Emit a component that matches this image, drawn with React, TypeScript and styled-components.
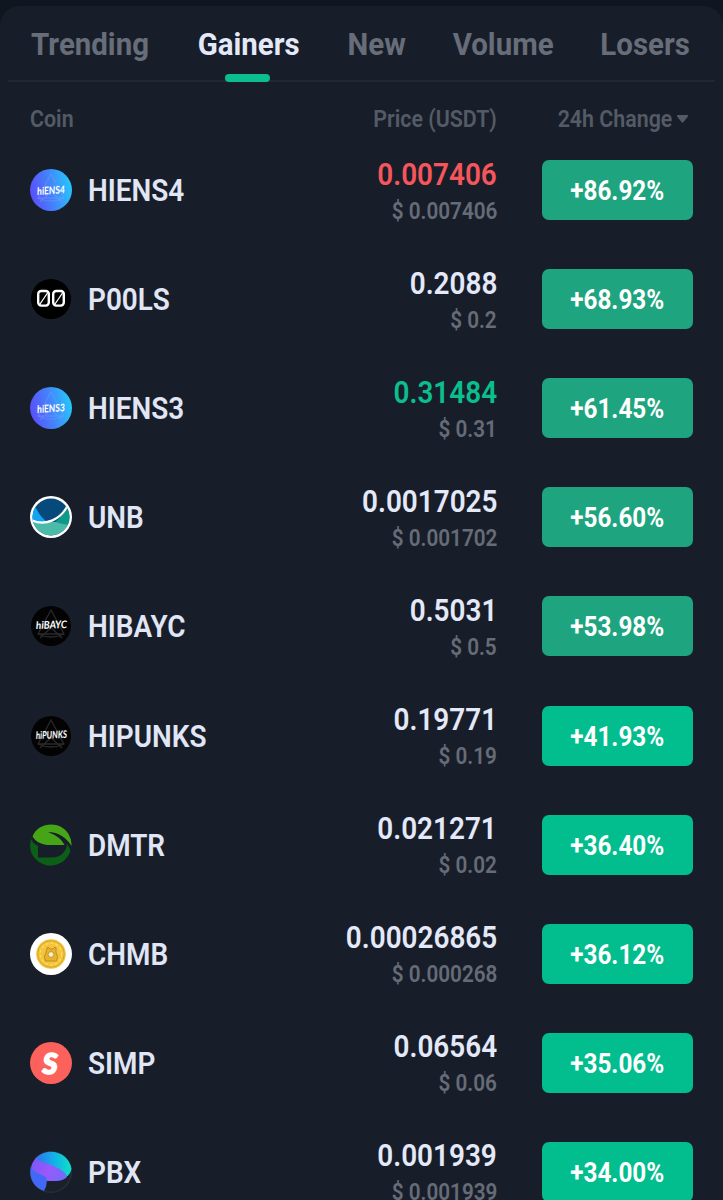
import React from "react";
import styled, { createGlobalStyle } from "styled-components";

const GlobalStyle = createGlobalStyle`
  * { box-sizing: border-box; }
  html, body { margin: 0; padding: 0; background: #0f161f; }
  body { font-family: Roboto, "Liberation Sans", sans-serif; overflow: hidden; }
`;

const Screen = styled.main`
  height: 1200px;
  padding-top: 6px;
  background: #0f161f;
  overflow: hidden;
`;

const Panel = styled.section`
  height: 1194px;
  border-radius: 20px 20px 0 0;
  background: #181e29;
  overflow: hidden;
`;

/* Condensed text: natural glyph shapes narrowed horizontally. */
const Narrow = styled.span<{ $x: number; $from?: string }>`
  display: inline-block;
  white-space: nowrap;
  transform: scaleX(${(p) => p.$x});
  transform-origin: ${(p) => p.$from ?? "left"} center;
`;

const Tabs = styled.nav`
  display: flex;
  justify-content: space-between;
  height: 76px;
  margin: 0 8px;
  padding: 0 24px 0 23px;
  border-bottom: 2px solid #222833;
`;

const Tab = styled.button<{ $active?: boolean; $w: number }>`
  position: relative;
  display: flex;
  justify-content: center;
  width: ${(p) => p.$w}px;
  height: 76px;
  padding: 0;
  border: 0;
  background: none;
  color: ${(p) => (p.$active ? "#e4e9fa" : "#676d79")};
  font: 700 31px/78px Roboto, "Liberation Sans", sans-serif;
  &::after {
    content: "";
    display: ${(p) => (p.$active ? "block" : "none")};
    position: absolute;
    bottom: 0;
    left: 50%;
    width: 45px;
    height: 8px;
    margin-left: -23px;
    border-radius: 4px;
    background: #0abf8d;
  }
`;

const Columns = styled.div`
  display: grid;
  grid-template-columns: 200px 1fr 196px;
  height: 53.5px;
  padding: 0 30px;
  color: #555b66;
  font-size: 23px;
  font-weight: 600;
  line-height: 76px;
`;

const ColumnName = styled.div<{ $end?: boolean }>`
  display: flex;
  align-items: center;
  height: 76px;
  justify-content: ${(p) => (p.$end ? "flex-end" : "flex-start")};
`;

const SortArrow = styled.svg`
  width: 13px;
  height: 10px;
  margin: 0 4px 2px 4px;
`;

const Row = styled.div`
  display: grid;
  grid-template-columns: 58px 200px 1fr 196px;
  align-items: center;
  height: 109.1px;
  padding: 0 30px;
`;

const Coin = styled.svg`
  display: block;
  width: 42px;
  height: 42px;
`;

const Name = styled.div`
  color: #e0e6f6;
  font-size: 31px;
  font-weight: 600;
  line-height: 40px;
  padding-top: 2px;
`;

const Prices = styled.div`
  display: flex;
  flex-direction: column;
  align-items: flex-end;
  padding-top: 6px;
`;

const Price = styled.div<{ $color?: string }>`
  color: ${(p) => p.$color ?? "#e4e9fa"};
  font-size: 31px;
  font-weight: 600;
  line-height: 37px;
`;

const Fiat = styled.div`
  color: #666c77;
  font-size: 23px;
  font-weight: 600;
  line-height: 38px;
`;

const Change = styled.div<{ $bright: boolean }>`
  justify-self: end;
  width: 151px;
  height: 60px;
  border-radius: 7px;
  background: ${(p) => (p.$bright ? "#02bd8d" : "#1ea47e")};
  color: #fff;
  font-size: 27px;
  font-weight: 700;
  line-height: 62px;
  text-align: center;
`;

const Triangles = ({ color }: { color: string }) => (
  <g fill="none" stroke={color} strokeWidth="1.3">
    <path d="M21 5 L34 29 Q21 35 8 29 Z" />
    <path d="M15 17 L32 33 M27 17 L10 33 M8 29 L34 29" />
  </g>
);

const Ens = ({ label, id }: { label: string; id: string }) => (
  <Coin viewBox="0 0 42 42">
    <defs>
      <linearGradient id={id} x1="0" y1=".6" x2="1" y2=".4">
        <stop offset="0" stopColor="#5b4dfb" />
        <stop offset=".5" stopColor="#4384fb" />
        <stop offset="1" stopColor="#25c8fb" />
      </linearGradient>
    </defs>
    <circle cx="21" cy="21" r="21" fill={`url(#${id})`} />
    <Triangles color="rgba(130,160,255,.35)" />
    <text x="21" y="25" textAnchor="middle" fill="#fff" fontFamily="Lato" fontStyle="italic" fontWeight="700" fontSize="10.5" textLength="28" lengthAdjust="spacingAndGlyphs" transform="rotate(-4 21 21)">{label}</text>
  </Coin>
);

const Dark = ({ label }: { label: string }) => (
  <Coin viewBox="0 0 42 42">
    <circle cx="21" cy="21" r="20" fill="#030304" />
    <Triangles color="#2a2a2c" />
    <text x="21.5" y="23.5" textAnchor="middle" fill="#fff" fontFamily="Lato" fontStyle="italic" fontWeight="700" fontSize="10.5" textLength="31" lengthAdjust="spacingAndGlyphs" transform="rotate(-2 21 21)">{label}</text>
  </Coin>
);

const Pools = () => (
  <Coin viewBox="0 0 42 42">
    <circle cx="21" cy="21" r="20" fill="#000" />
    <g fill="none" stroke="#fff" strokeWidth="2.4">
      <rect x="8.2" y="13" width="10.6" height="14.6" rx="3" />
      <rect x="23.2" y="13" width="10.6" height="14.6" rx="3" />
      <path d="M10 26 L17.5 15 M25 26 L32.5 15" strokeWidth="1.3" />
    </g>
  </Coin>
);

const Unb = () => (
  <Coin viewBox="0 0 42 42">
    <defs><clipPath id="unb"><circle cx="21" cy="21" r="18.5" /></clipPath></defs>
    <circle cx="21" cy="21" r="21" fill="#fff" />
    <g clipPath="url(#unb)">
      <rect width="42" height="42" fill="#064a7b" />
      <path d="M0 0 L5 10 Q10 22 20 28 L0 29 Z" fill="#12a4f4" />
      <path d="M42 10 L36 12 Q32 21 25 26 L42 32 Z" fill="#0b9b88" />
      <path d="M0 26 L26 26 Q33 29 42 29 V42 H0 Z" fill="#4cbaa9" />
      <path d="M1 24 C16 31 31 23 38 9" fill="none" stroke="#fff" strokeWidth="2.2" />
    </g>
  </Coin>
);

const Dmtr = () => (
  <Coin viewBox="0 0 42 42">
    <path d="M2.5 12.5 C8 -2 30 -4 38.5 10 Q42 16 41.5 22 C37 14 28 8 18 8 Q31 13 34.5 21 H17 Q7 20 2.5 12.5Z" fill="#45a516" />
    <path d="M1.2 15 Q3 20 8 22 V33.5 H22 C31 33.5 36 28 37 20 Q40 24 40.5 27 C36 40 21 46 9 38 Q-3 29 1.2 15Z" fill="#0c5f17" />
  </Coin>
);

const Chmb = () => (
  <Coin viewBox="0 0 42 42">
    <circle cx="21" cy="21" r="21" fill="#fff" />
    <circle cx="21" cy="21" r="14.8" fill="#f2c53d" />
    <circle cx="21" cy="21" r="13.3" fill="none" stroke="#d8a526" strokeWidth="1" />
    <circle cx="21" cy="21" r="10.8" fill="none" stroke="#ffdc62" strokeWidth="1.2" strokeDasharray="3 2" />
    <path d="M17 15 l1-1 2 2 h3 l2-2 1 1 v5 q3 3 .5 8 h-11 q-2.500-5 .5-8z" fill="#e6b42f" stroke="#c18c24" strokeWidth="1" />
    <circle cx="21" cy="21.500" r="3" fill="#f5e5a4" stroke="#bd8a25" strokeWidth=".8" />
    <circle cx="21" cy="21.500" r="1" fill="#fff" />
  </Coin>
);

const Simp = () => (
  <Coin viewBox="0 0 42 42">
    <circle cx="21" cy="21" r="21" fill="#fc625b" />
    <text x="20" y="32" textAnchor="middle" fill="#fff" stroke="#fff" strokeWidth="1.600" fontFamily="Lato" fontStyle="italic" fontWeight="900" fontSize="29">S</text>
  </Coin>
);

const Pbx = () => (
  <Coin viewBox="0 0 42 42">
    <defs>
      <linearGradient id="pbx1" x1=".1" y1=".3" x2="1" y2=".3">
        <stop offset="0" stopColor="#2a7df0" /><stop offset=".55" stopColor="#10b9e4" /><stop offset="1" stopColor="#10dfc4" />
      </linearGradient>
      <linearGradient id="pbx2" x1="0" y1=".3" x2="1" y2=".7">
        <stop offset="0" stopColor="#7b58fa" /><stop offset=".5" stopColor="#9a58fb" /><stop offset="1" stopColor="#6f6dfa" />
      </linearGradient>
    </defs>
    <circle cx="21" cy="21" r="20.300" fill="#1b202a" stroke="#292e38" strokeWidth="1.400" />
    <path d="M5 8 C16 -5 39 0 41.500 18 Q40 24 36 26 C29 17 17 16 5 8Z" fill="url(#pbx1)" />
    <path d="M6 7 C13 14 34 15 37 26 Q33 30 26 30 H18 L4 29 Q-3 17 6 7Z" fill="url(#pbx2)" />
    <path d="M1 15 C3 24 16 22 17 29 Q17 35 14 40 C4 37 -2 27 1 15Z" fill="#4269f5" />
  </Coin>
);

const coins = [
  { icon: <Ens label="hiENS4" id="ens4" />, name: "HIENS4", price: "0.007406", fiat: "0.007406", change: "+86.92%", color: "#f6565b" },
  { icon: <Pools />, name: "P00LS", price: "0.2088", fiat: "0.2", change: "+68.93%" },
  { icon: <Ens label="hiENS3" id="ens3" />, name: "HIENS3", price: "0.31484", fiat: "0.31", change: "+61.45%", color: "#0abf8d" },
  { icon: <Unb />, name: "UNB", price: "0.0017025", fiat: "0.001702", change: "+56.60%" },
  { icon: <Dark label="hiBAYC" />, name: "HIBAYC", price: "0.5031", fiat: "0.5", change: "+53.98%" },
  { icon: <Dark label="hiPUNKS" />, name: "HIPUNKS", price: "0.19771", fiat: "0.19", change: "+41.93%" },
  { icon: <Dmtr />, name: "DMTR", price: "0.021271", fiat: "0.02", change: "+36.40%" },
  { icon: <Chmb />, name: "CHMB", price: "0.00026865", fiat: "0.000268", change: "+36.12%" },
  { icon: <Simp />, name: "SIMP", price: "0.06564", fiat: "0.06", change: "+35.06%" },
  { icon: <Pbx />, name: "PBX", price: "0.001939", fiat: "0.001939", change: "+34.00%" },
];

const tabs = [
  { label: "Trending", w: 119 },
  { label: "Gainers", w: 106 },
  { label: "New", w: 60 },
  { label: "Volume", w: 102 },
  { label: "Losers", w: 92 },
];

export default function App() {
  return (
    <>
      <GlobalStyle />
      <Screen>
        <Panel>
          <Tabs>
            {tabs.map((t) => (
              <Tab key={t.label} $w={t.w} $active={t.label === "Gainers"}>
                <Narrow $x={0.95} $from="center">{t.label}</Narrow>
              </Tab>
            ))}
          </Tabs>
          <Columns>
            <ColumnName><Narrow $x={0.93}>Coin</Narrow></ColumnName>
            <ColumnName $end><Narrow $x={0.93} $from="right">Price (USDT)</Narrow></ColumnName>
            <ColumnName $end>
              <Narrow $x={0.93} $from="right">24h Change</Narrow>
              <SortArrow viewBox="0 0 13 10"><path d="M2 1 H11 Q13 1 11.500 3 L7.500 8 Q6.500 9.300 5.500 8 L1.500 3 Q0 1 2 1Z" fill="#555b66" /></SortArrow>
            </ColumnName>
          </Columns>
          {coins.map((c) => (
            <Row key={c.name}>
              {c.icon}
              <Name><Narrow $x={0.9}>{c.name}</Narrow></Name>
              <Prices>
                <Price $color={c.color}><Narrow $x={0.9} $from="right">{c.price}</Narrow></Price>
                <Fiat><Narrow $x={0.9} $from="right">$ {c.fiat}</Narrow></Fiat>
              </Prices>
              <Change $bright={parseFloat(c.change) < 50}>
                <Narrow $x={0.9} $from="center">{c.change}</Narrow>
              </Change>
            </Row>
          ))}
        </Panel>
      </Screen>
    </>
  );
}
